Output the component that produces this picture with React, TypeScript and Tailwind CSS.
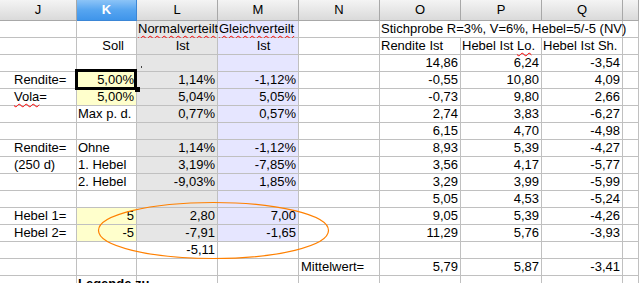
import React from "react";

type Cell = {
  t?: React.ReactNode;
  a?: "l" | "r" | "c";
  bg?: string;
  cls?: string;
  span?: number;
};

const gray = "bg-[#e6e6e6]";
const lav = "bg-[#e6e6ff]";
const yel = "bg-[#ffffcc]";

const Wavy = ({ children }: { children: React.ReactNode }) => (
  <span className="underline decoration-wavy decoration-[#ff0000] decoration-1 underline-offset-[2px]">
    {children}
  </span>
);

const e: Cell = {};
const g: Cell = { bg: gray };
const v: Cell = { bg: lav };
const n = (t: string, bg?: string): Cell => ({ t, a: "r", bg });
const l = (t: React.ReactNode, cls?: string): Cell => ({ t, a: "l", cls });
const lab = (t: React.ReactNode): Cell => ({ t, a: "l", cls: "pl-[14px]" });

const cols = ["J", "K", "L", "M", "N", "O", "P", "Q", ""];

const rows: Cell[][] = [
  [e, e, { t: <Wavy>Normalverteilt</Wavy>, a: "l", bg: gray }, { t: <Wavy>Gleichverteilt</Wavy>, a: "l", bg: lav }, e, { t: "Stichprobe R=3%, V=6%, Hebel=5/-5 (NV)", a: "l", span: 3 }, e],
  [e, { t: "Soll", a: "r", cls: "pr-[12px]" }, { t: "Ist", a: "c", bg: gray, cls: "pl-[11px]" }, { t: "Ist", a: "c", bg: lav, cls: "pl-[11px]" }, e, l("Rendite Ist"), l(<>Hebel Ist <Wavy>Lo</Wavy>.</>), l("Hebel Ist Sh."), e],
  [e, e, { t: <span className="block ml-[3px] mt-[11px] w-[1px] h-[2px] bg-[#444]" />, bg: gray }, v, e, n("14,86"), n("6,24"), n("-3,54"), e],
  [lab("Rendite="), n("5,00%", yel), n("1,14%", gray), n("-1,12%", lav), e, n("-0,55"), n("10,80"), n("4,09"), e],
  [lab(<><Wavy>Vola</Wavy>=</>), n("5,00%", yel), n("5,04%", gray), n("5,05%", lav), e, n("-0,73"), n("9,80"), n("2,66"), e],
  [e, l("Max p. d."), n("0,77%", gray), n("0,57%", lav), e, n("2,74"), n("3,83"), n("-6,27"), e],
  [e, e, g, v, e, n("6,15"), n("4,70"), n("-4,98"), e],
  [lab("Rendite="), l("Ohne"), n("1,14%", gray), n("-1,12%", lav), e, n("8,93"), n("5,39"), n("-4,27"), e],
  [lab("(250 d)"), l("1. Hebel"), n("3,19%", gray), n("-7,85%", lav), e, n("3,56"), n("4,17"), n("-5,77"), e],
  [e, l("2. Hebel"), n("-9,03%", gray), n("1,85%", lav), e, n("3,29"), n("3,99"), n("-5,99"), e],
  [e, e, g, v, e, n("5,05"), n("4,53"), n("-5,24"), e],
  [lab("Hebel 1="), n("5", yel), n("2,80", gray), n("7,00", lav), e, n("9,05"), n("5,39"), n("-4,26"), e],
  [lab("Hebel 2="), n("-5", yel), n("-7,91", gray), n("-1,65", lav), e, n("11,29"), n("5,76"), n("-3,93"), e],
  [e, e, n("-5,11"), e, e, e, e, e, e],
  [e, e, e, e, l("Mittelwert=", "pl-[2px]"), n("5,79"), n("5,87"), n("-3,41"), e],
  [e, l("Legende zu", "font-bold"), e, e, e, e, e, e, e],
];

function GridCell({ c }: { c: Cell }) {
  const align =
    c.a === "r" ? "text-right pr-[2px]" : c.a === "c" ? "text-center" : "text-left pl-[1px]";
  return (
    <div
      className={`h-[17px] overflow-visible whitespace-nowrap border-r border-b border-[#c0c0c0] leading-[16px] ${align} ${c.bg ?? ""} ${c.cls ?? ""} ${c.span === 3 ? "col-span-3" : ""}`}
    >
      {c.t}
    </div>
  );
}

export default function App() {
  return (
    <div className="relative w-[639px] h-[283px] overflow-hidden bg-white text-[13px] text-black font-['Liberation_Sans',Arial,sans-serif]">
      <div className="grid grid-cols-[77px_60px_81px_81px_81px_81px_81px_81px_1fr]">
        {cols.map((h, i) =>
          h === "K" ? (
            <div
              key={i}
              className="h-[21px] flex items-center justify-center border-r border-b border-[#3b86d6] bg-linear-to-b from-[#8cc4f7] via-[#56a5f0] to-[#3f95ea] font-bold text-white"
            >
              {h}
            </div>
          ) : (
            <div
              key={i}
              className="h-[21px] flex items-center justify-center border-r border-b border-[#a8a8a8] bg-linear-to-b from-[#f4f4f4] to-[#dadada]"
            >
              {h}
            </div>
          )
        )}
        {rows.map((r, ri) => r.map((c, ci) => <GridCell key={`${ri}-${ci}`} c={c} />))}
      </div>

      {/* cell cursor */}
      <div className="absolute left-[75px] top-[69px] w-[62px] h-[21px] border-[3px] border-black pointer-events-none" />
      <div className="absolute left-[135px] top-[87px] w-[5px] h-[5px] bg-black pointer-events-none" />

      {/* drawn ellipse */}
      <svg className="absolute left-0 top-0 pointer-events-none" width="639" height="283">
        <ellipse cx="213.5" cy="230.5" rx="115" ry="28" fill="none" stroke="#ff8000" strokeWidth="1.2" />
      </svg>
    </div>
  );
}
